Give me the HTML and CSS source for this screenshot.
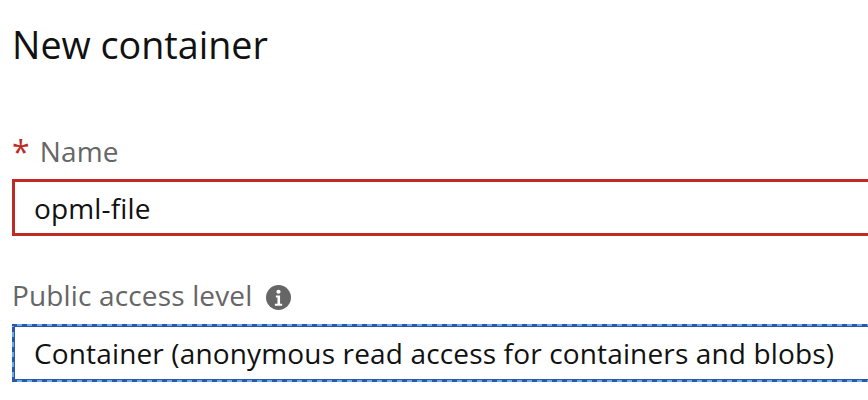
FILE: index.html
```html
<!DOCTYPE html>
<html lang="en">

<head>
  <meta charset="UTF-8">
  <title>New container</title>
  <link rel="stylesheet" href="styles.css">
</head>

<body>
  <div class="panel">
    <h1 class="title">New container</h1>

    <div class="field name-field">
      <div class="label"><span class="required">*</span>Name</div>
      <div class="box box-error">opml-file</div>
    </div>

    <div class="field access-field">
      <div class="label">Public access level
        <svg class="info" viewBox="0 0 24 24" width="25" height="25">
          <circle cx="12" cy="12" r="12" fill="#666"></circle>
          <circle cx="12" cy="6.500" r="2" fill="#fff"></circle>
          <path d="M9.500 10h4v8H15.500v2H8.500v-2H11v-6H9.500z" fill="#fff"></path>
        </svg>
      </div>
      <div class="box box-focus">Container (anonymous read access for containers and blobs)</div>
    </div>
  </div>
</body>

</html>
```

FILE: styles.css
```css
html,
body {
  margin: 0;
  padding: 0;
  height: 100%;
  background-color: #fff;
  overflow: hidden;
}

body {
  font-family: "Open Sans", "Noto Sans", sans-serif;
  color: #000;
}

.panel {
  padding: 21px 0 0 12px;
}

.title {
  margin: 0;
  font-size: 37.700px;
  font-weight: 400;
  line-height: 48px;
  color: #111;
}

.name-field {
  margin-top: 66px;
}

.access-field {
  margin-top: 43px;
}

.label {
  display: flex;
  align-items: center;
  height: 32px;
  font-size: 28px;
  letter-spacing: 0.15px;
  color: #666;
}

.required {
  margin-right: 10px;
  color: #bf2b24;
  font-size: 32px;
}

.info {
  margin-left: 14px;
  margin-top: 5px;
}

.box {
  box-sizing: border-box;
  display: flex;
  align-items: center;
  font-size: 28px;
  letter-spacing: 0.15px;
  color: #111;
  background-color: #fff;
}

.box-error {
  height: 57px;
  margin-top: 12px;
  padding-left: 19px;
  border: 3px solid #bf2b24;
  border-right: none;
}

/* keyboard focus ring: light blue with dark dashes and a dark inner line */
.box-focus {
  height: 58px;
  margin-top: 13px;
  padding-left: 20px;
  border: 2px solid transparent;
  border-right: none;
  box-shadow: inset 1px 1px 0 #2f55a8, inset 0 -1px 0 #2f55a8;
  background:
    linear-gradient(#fff, #fff) padding-box,
    repeating-linear-gradient(90deg, #2f55a8 0 5px, #62acef 5px 10px) top / 100% 2px no-repeat border-box,
    repeating-linear-gradient(90deg, #2f55a8 0 5px, #62acef 5px 10px) bottom / 100% 2px no-repeat border-box,
    repeating-linear-gradient(0deg, #2f55a8 0 5px, #62acef 5px 10px) left / 2px 100% no-repeat border-box;
}
```
